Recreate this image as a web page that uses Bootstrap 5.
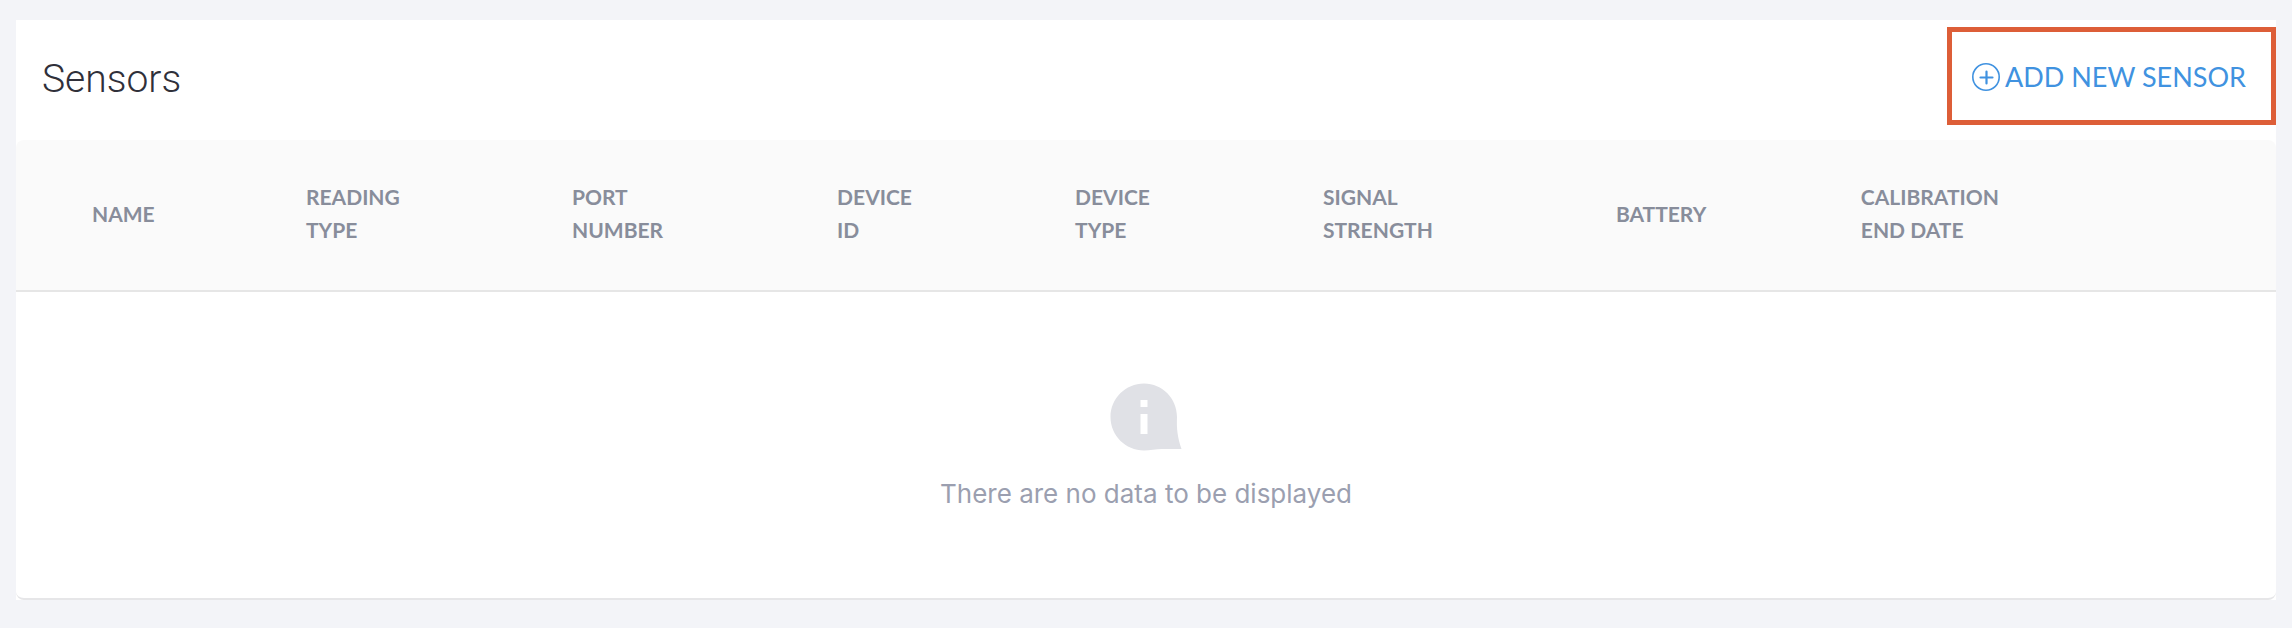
<!DOCTYPE html>
<html lang="en">
<head>
<meta charset="utf-8">
<meta name="viewport" content="width=device-width, initial-scale=1">
<title>Sensors</title>
<link rel="stylesheet" href="https://cdn.jsdelivr.net/npm/bootstrap@5.3.0/dist/css/bootstrap.min.css">
<style>
  body { background: #f3f4f8; font-family: Inter, "Liberation Sans", sans-serif; font-size: 26px; line-height: 40px; }
  .page { padding: 20px 16px 28px; }
  .panel { background: #fff; }
  .panel-top { padding: 7px 0 15px 26px; }
  .panel-title { padding-top: 6px; font-family: Roboto, sans-serif; font-weight: 300; font-size: 39px; line-height: 52px; color: #30303a; }
  .btn-add { gap: 5px; padding: 25px 25px 23px 20px; border: 5px solid #dd5e38; border-radius: 0; color: #4092e0; font-family: Lato, sans-serif; font-size: 27px; line-height: 40px; }
  .btn-add:hover { color: #2477c6; border-color: #dd5e38; }
  .grid-box { border-bottom: 2px solid #e6e6e8; border-radius: 8px; overflow: hidden; }
  .sensor-table { table-layout: fixed; border-collapse: separate; border-spacing: 0; --bs-table-bg: #fafafa; }
  .sensor-table th { padding: 40px 0 44px 76px; border-bottom: 2px solid #e6e6e6; vertical-align: middle; font-family: Lato, sans-serif; font-weight: 700; font-size: 21px; line-height: 33px; color: #888d9b; }
  .empty-state { padding: 91px 16px 84px; gap: 23px; color: #9b9fb0; }
</style>
</head>
<body>
<main class="page">
  <section class="panel">
    <header class="panel-top d-flex align-items-center justify-content-between">
      <h1 class="panel-title mb-0">Sensors</h1>
      <button type="button" class="btn btn-add d-flex align-items-center">
        <svg width="28" height="28" viewBox="0 0 28 28" fill="none" stroke="currentColor" aria-hidden="true">
          <circle cx="14" cy="14" r="13.2" stroke-width="1.6"/>
          <path d="M14.5 8.5v12M8.5 14.5h12" stroke-width="2.2" stroke-linecap="round"/>
        </svg>
        <span>ADD NEW SENSOR</span>
      </button>
    </header>
    <div class="grid-box">
      <table class="table sensor-table mb-0">
        <colgroup>
          <col style="width:9.47%"><col style="width:11.77%"><col style="width:11.73%"><col style="width:10.53%"><col style="width:10.97%"><col style="width:12.96%"><col style="width:10.84%"><col>
        </colgroup>
        <thead>
          <tr>
            <th scope="col">NAME</th>
            <th scope="col">READING<br>TYPE</th>
            <th scope="col">PORT<br>NUMBER</th>
            <th scope="col">DEVICE<br>ID</th>
            <th scope="col">DEVICE<br>TYPE</th>
            <th scope="col">SIGNAL<br>STRENGTH</th>
            <th scope="col">BATTERY</th>
            <th scope="col">CALIBRATION<br>END DATE</th>
          </tr>
        </thead>
      </table>
      <div class="empty-state d-flex flex-column align-items-center">
        <svg width="72" height="68" viewBox="0 0 72 68" aria-hidden="true">
          <path fill="#e0e1e6" fill-rule="evenodd" d="M34 .5C52.500.5 67 15.500 67 34C66.500 46 67.500 54 71.500 66H52C46 66 40 67.500 34 67.500C15.500 67.500.5 52.500.5 34C.5 15.500 15.500.5 34 .5ZM30.500 17V24H37.500V17ZM30.500 31V51H37.500V31Z"/>
        </svg>
        <p class="mb-0">There are no data to be displayed</p>
      </div>
    </div>
  </section>
</main>
<script src="https://cdn.jsdelivr.net/npm/bootstrap@5.3.0/dist/js/bootstrap.bundle.min.js"></script>
</body>
</html>
